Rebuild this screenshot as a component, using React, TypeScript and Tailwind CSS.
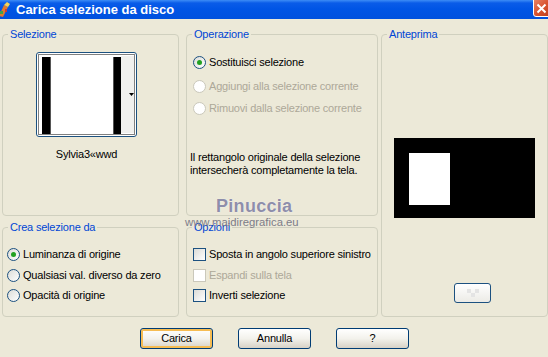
import React from 'react';

function Radio({ checked = false, disabled = false }: { checked?: boolean; disabled?: boolean }) {
  return (
    <span
      className={`flex h-[13px] w-[13px] shrink-0 items-center justify-center rounded-full border ${
        disabled ? 'border-[#CAC8BB] bg-white' : 'border-[#1C5180] bg-linear-to-br from-[#DCDCD7] to-white'
      }`}
    >
      {checked && <span className="h-[5px] w-[5px] rounded-full bg-[#21A121]" />}
    </span>
  );
}

function Check({ disabled = false }: { disabled?: boolean }) {
  return (
    <span
      className={`block h-[13px] w-[13px] shrink-0 border ${
        disabled ? 'border-[#CAC8BB] bg-white' : 'border-[#1C5180] bg-linear-to-br from-[#DCDCD7] to-white'
      }`}
    />
  );
}

function Option({ control, label, disabled = false, className = '' }: { control: React.ReactNode; label: string; disabled?: boolean; className?: string }) {
  return (
    <div className={`flex h-[13px] items-center gap-[3px] ${className}`}>
      {control}
      <span className={`leading-[13px] whitespace-nowrap ${disabled ? 'text-[#ACA899]' : 'text-black'}`}>{label}</span>
    </div>
  );
}

function Group({ title, className = '', children }: { title: string; className?: string; children?: React.ReactNode }) {
  return (
    <fieldset className={`rounded-[4px] border border-[#D0D0BF] ${className}`}>
      <legend className="ml-[5px] px-[2px] text-[#0046D5] leading-[13px]">{title}</legend>
      {children}
    </fieldset>
  );
}

function Button({ label, primary = false }: { label: string; primary?: boolean }) {
  return (
    <button
      className={`flex h-[21px] w-[73px] items-center justify-center rounded-[3px] border border-[#003C74] bg-linear-to-b from-white via-[#F3F2EC] to-[#D8D2C6] text-black ${
        primary ? 'shadow-[inset_0_0_0_2px_#F6BC52]' : ''
      }`}
    >
      {label}
    </button>
  );
}

export default function App() {
  return (
    <div className="relative h-[357px] w-[548px] overflow-hidden bg-[#ECE9D8] font-['Liberation_Sans',Arial,sans-serif] text-[11px] tracking-[-0.2px]">
      {/* title bar */}
      <div className="relative flex h-[19px] items-center bg-[linear-gradient(to_bottom,#3D8DF6_0px,#0A5CE8_3px,#0055E5_9px,#0051DE_19px)]">
        <svg width="14" height="16" viewBox="0 0 14 16" className="ml-[-2px] mt-[1px]">
          <path d="M1 14 L6 3 L10 5 L5 15 Z" fill="#E07A2E" />
          <path d="M6 3 L9 0 L12 2 L10 5 Z" fill="#F4D35A" />
          <rect x="2" y="9" width="3" height="3" fill="#3FA34D" />
          <rect x="7" y="7" width="2" height="3" fill="#C93A3A" />
        </svg>
        <span className="ml-[4px] text-[13px] font-bold tracking-normal text-white">Carica selezione da disco</span>
        <div className="absolute left-[533px] top-[-4px] flex h-[21px] w-[21px] items-center justify-center rounded-[3px] border border-white bg-linear-to-br from-[#E98A6E] via-[#D9532F] to-[#B83A1B]">
          <svg width="11" height="11" viewBox="0 0 11 11" className="mt-[3px] ml-[-4px]">
            <path d="M1.5 1.5 L9.5 9.5 M9.5 1.5 L1.5 9.5" stroke="white" strokeWidth="2" />
          </svg>
        </div>
      </div>

      {/* groups */}
      <div className="ml-[2px] mt-[9px] flex">
        <div className="flex w-[177px] flex-col">
          <Group title="Selezione" className="h-[188px]">
            <div className="ml-[33px] mt-[11px] h-[85px] w-[101px] overflow-hidden rounded-[3px] border border-[#1C5180] bg-white">
              <svg width="99" height="83" viewBox="0 0 99 83">
                <rect x="84" y="3" width="13" height="77" fill="#F0F0EE" />
                <rect x="5" y="4" width="9" height="77" fill="#000" />
                <rect x="13" y="4" width="1" height="77" fill="#555" />
                <rect x="76" y="4" width="8" height="77" fill="#000" />
                <rect x="76" y="4" width="1" height="77" fill="#555" />
                <rect x="1.5" y="1.5" width="96" height="80" fill="none" stroke="#000" strokeDasharray="1 1" />
                <path d="M92 40 H97 L94.5 43 Z" fill="#000" />
              </svg>
            </div>
            <div className="ml-[33px] mt-[11px] w-[101px] text-center leading-[13px]">Sylvia3«wwd</div>
          </Group>
          <Group title="Crea selezione da" className="mt-[5px] h-[96px]">
            <div className="ml-[4px] mt-[14px] flex flex-col">
              <Option control={<Radio checked />} label="Luminanza di origine" />
              <Option className="mt-[8px]" control={<Radio />} label="Qualsiasi val. diverso da zero" />
              <Option className="mt-[7px]" control={<Radio />} label="Opacità di origine" />
            </div>
          </Group>
        </div>

        <div className="ml-[7px] flex w-[192px] flex-col">
          <Group title="Operazione" className="h-[188px]">
            <div className="ml-[6px] mt-[15px] flex flex-col">
              <Option control={<Radio checked />} label="Sostituisci selezione" />
              <Option className="mt-[11px]" control={<Radio disabled />} label="Aggiungi alla selezione corrente" disabled />
              <Option className="mt-[9px]" control={<Radio disabled />} label="Rimuovi dalla selezione corrente" disabled />
            </div>
            <p className="ml-[3px] mt-[36px] leading-[13px]">
              Il rettangolo originale della selezione
              <br />
              intersecherà completamente la tela.
            </p>
          </Group>
          <Group title="Opzioni" className="mt-[5px] h-[96px]">
            <div className="ml-[6px] mt-[14px] flex flex-col">
              <Option control={<Check />} label="Sposta in angolo superiore sinistro" />
              <Option className="mt-[8px]" control={<Check disabled />} label="Espandi sulla tela" disabled />
              <Option className="mt-[7px]" control={<Check />} label="Inverti selezione" />
            </div>
          </Group>
        </div>

        <Group title="Anteprima" className="ml-[3px] h-[289px] w-[167px]">
          <div className="ml-[12px] mt-[97px] flex h-[80px] w-[141px] bg-black pl-[15px] pt-[15px]">
            <div className="h-[52px] w-[41px] bg-white" />
          </div>
          <div className="ml-[72px] mt-[65px] flex h-[20px] w-[37px] items-center justify-center rounded-[3px] border border-[#1C5180] bg-linear-to-b from-white to-[#ECEBE6]">
            <svg width="20" height="10" viewBox="0 0 20 10">
              <rect x="4" y="1" width="4" height="4" fill="#E4E4E4" />
              <rect x="12" y="1" width="4" height="4" fill="#E4E4E4" />
              <rect x="8" y="5" width="4" height="4" fill="#E4E4E4" />
            </svg>
          </div>
        </Group>
      </div>

      {/* buttons */}
      <div className="mt-[11px] flex gap-[25px] pl-[140px]">
        <Button label="Carica" primary />
        <Button label="Annulla" />
        <Button label="?" />
      </div>

      {/* watermark */}
      <div className="pointer-events-none absolute left-[216px] top-[193px] text-[18px] font-bold tracking-[0.3px] text-[#8E8EAA] [text-shadow:0_0_1px_#fff]">
        Pinuccia
      </div>
      <div className="pointer-events-none absolute left-[185px] top-[214px] text-[11.3px] tracking-normal text-[#7C7C88]">
        www.maidiregrafica.eu
      </div>
    </div>
  );
}
